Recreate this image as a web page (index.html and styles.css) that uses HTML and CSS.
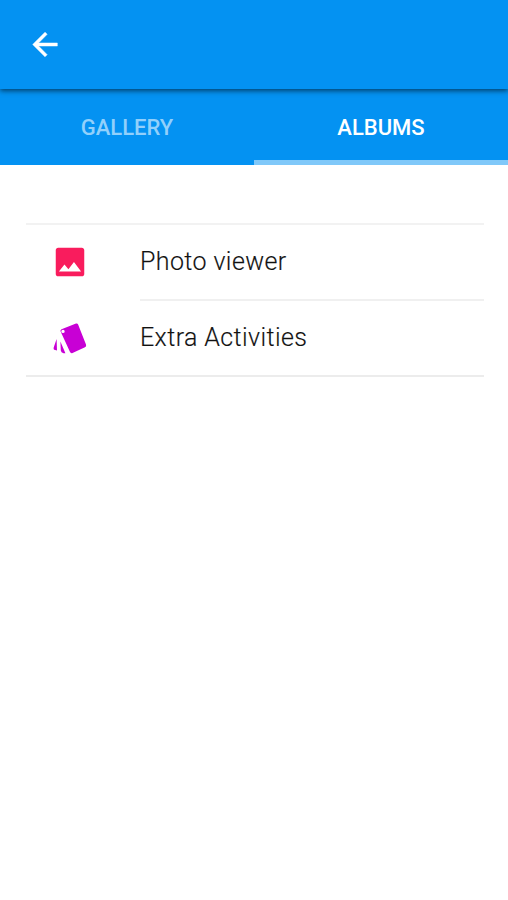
FILE: index.html
```html
<!DOCTYPE html>
<html lang="en">
<head>
<meta charset="utf-8">
<title>Albums</title>
<link rel="stylesheet" href="styles.css">
</head>
<body>
<header class="toolbar">
  <svg class="back" viewBox="0 0 24 24"><path d="M20 11H7.830l5.590-5.590L12 4l-8 8 8 8 1.410-1.410L7.830 13H20v-2z"/></svg>
</header>
<nav class="tabs">
  <a class="tab"><span>GALLERY</span></a>
  <a class="tab active"><span>ALBUMS</span></a>
</nav>
<main class="list">
  <div class="item">
    <svg class="icon photo" viewBox="0 0 24 24"><path d="M21 19.500V4.500c0-.8-.7-1.500-1.500-1.500h-15C3.700 3 3 3.700 3 4.500v15c0 .8.7 1.500 1.500 1.500h15c.8 0 1.500-.7 1.500-1.500zM8.500 13.500l2.500 3.010L14.500 12l4.500 6H5l3.500-4.500z"/></svg>
    <div class="label"><span class="viewer">Photo viewer</span></div>
  </div>
  <div class="item">
    <svg class="icon style" viewBox="0 0 34 34"><path fill-rule="evenodd" d="M8.500 7.300L23 1.500Q24.500 1 25.100 2.500L33 22.500Q33.700 24.500 32 25.200L19.500 31Q17.700 31.700 16.900 29.700L7.600 9.500Q7 8 8.500 7.300zM10 7.700a1.700 1.700 0 1 0 0 3.400a1.700 1.700 0 0 0 0-3.400zM3.600 17L4 28.500L1.200 27.700Q.3 27.200 .7 25.500zM7.400 19.500L12.400 31.200H10.500Q8 30.700 7.800 28.500z"/></svg>
    <div class="label"><span class="activities">Extra Activities</span></div>
  </div>
</main>
</body>
</html>
```
FILE: styles.css
```css
* { box-sizing: border-box; }
body { margin: 0; min-height: 900px; background: #fff; font-family: Roboto, sans-serif; }
.toolbar { height: 89px; padding: 26px 0 0 26px; background: #0492f2; box-shadow: 0 2px 5px rgba(0,0,0,.55); position: relative; }
.back { display: block; width: 38px; height: 37px; fill: #fff; stroke: #fff; stroke-width: .3; }
.tabs { height: 76px; display: flex; background: #0492f2; }
.tab { flex: 1; padding-top: 5px; display: flex; align-items: center; justify-content: center; font-size: 22px; font-weight: 500; color: #92d0fb; border-bottom: 5px solid transparent; }
.active { color: #fff; border-bottom-color: #80c8f9; }
.list { margin: 58px 24px 0 26px; border-top: 2px solid #f2f2f2; }
.item { height: 76px; display: flex; align-items: center; border-bottom: 2px solid #ececec; }
.item:first-child { border-bottom: 0; }
.icon { flex: none; }
.photo { width: 38px; height: 38px; margin: 0 0 2px 25px; fill: #f91c5d; }
.style { width: 34px; height: 34px; margin: 2px 2px 0 27px; fill: #c800d5; }
.label { margin-left: 51px; height: 76px; padding-bottom: 1px; flex: 1; display: flex; align-items: center; font-size: 25px; font-weight: 300; letter-spacing: .4px; color: #111; -webkit-text-stroke: .15px #222; }
.item:first-child .label { border-bottom: 2px solid #f0f0f0; }
```
